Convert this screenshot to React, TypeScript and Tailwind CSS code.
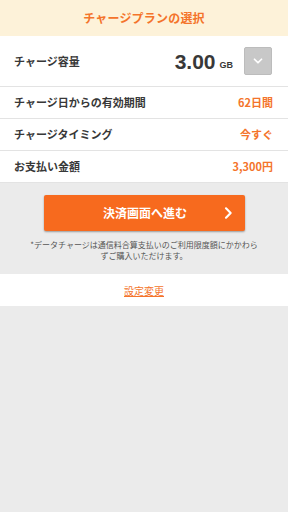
import React from 'react';

const jp = { fontFamily: '"Noto Sans CJK JP", "Noto Sans", sans-serif' };

const ChevronDown = () => (
  <svg className="w-3.5 h-3.5" viewBox="0 0 24 24" fill="none" stroke="white" strokeWidth={3} strokeLinecap="round" strokeLinejoin="round">
    <path d="M6 9l6 6 6-6" />
  </svg>
);

const ChevronRight = () => (
  <svg className="w-4 h-4" viewBox="0 0 24 24" fill="none" stroke="white" strokeWidth={3.2} strokeLinecap="round" strokeLinejoin="round">
    <path d="M9 5l7 7-7 7" />
  </svg>
);

const rows = [
  { label: 'チャージ日からの有効期間', value: '62日間' },
  { label: 'チャージタイミング', value: '今すぐ' },
  { label: 'お支払い金額', value: '3,300円' },
];

export default function App() {
  return (
    <div className="w-[288px] min-h-[512px] bg-[#ebebeb] text-[#383838]" style={jp}>
      {/* Header */}
      <div className="h-[36px] bg-[#fdf2d9] flex items-center justify-center">
        <h1 className="text-[12px] font-bold text-[#f4742b] tracking-[0.2px]">チャージプランの選択</h1>
      </div>

      {/* Capacity */}
      <div className="h-[51px] bg-white flex items-center pl-[14px] pr-[16px] border-b border-[#e3e3e3]">
        <span className="text-[11px] font-bold flex-1">チャージ容量</span>
        <span className="text-[21px] font-bold leading-none" style={{ fontFamily: '"Liberation Sans", Arial, sans-serif' }}>3.00</span>
        <span className="text-[9px] font-bold ml-[4px] mt-[8px] leading-none" style={{ fontFamily: '"Liberation Sans", Arial, sans-serif' }}>GB</span>
        <button className="ml-[11px] w-[28px] h-[28px] bg-[#c8c8c8] rounded-[2px] border border-[#bcbcbc] flex items-center justify-center">
          <ChevronDown />
        </button>
      </div>

      {rows.map((r) => (
        <div key={r.label} className="h-[32px] bg-white flex items-center justify-between pl-[14px] pr-[15px] border-b border-[#e3e3e3]">
          <span className="text-[11px] font-bold">{r.label}</span>
          <span className="text-[11px] font-bold text-[#f4742b]">{r.value}</span>
        </div>
      ))}

      {/* Action */}
      <div className="pt-[12px] pb-[13px] flex flex-col items-center">
        <button className="relative w-[201px] h-[36px] bg-[#f76a1e] rounded-[2px] shadow-[0_1px_2px_rgba(0,0,0,0.35)] flex items-center justify-center">
          <span className="text-[12px] font-bold text-white pl-[2px]">決済画面へ進む</span>
          <span className="absolute right-[9px] top-1/2 -translate-y-1/2"><ChevronRight /></span>
        </button>
        <p className="mt-[8px] w-[231px] text-[8px] leading-[11px] text-[#555] text-center">
          *データチャージは通信料合算支払いのご利用限度額にかかわらずご購入いただけます。
        </p>
      </div>

      {/* Settings link */}
      <div className="h-[32px] bg-white flex items-center justify-center">
        <a className="text-[10px] text-[#f4742b] underline">設定変更</a>
      </div>
    </div>
  );
}
